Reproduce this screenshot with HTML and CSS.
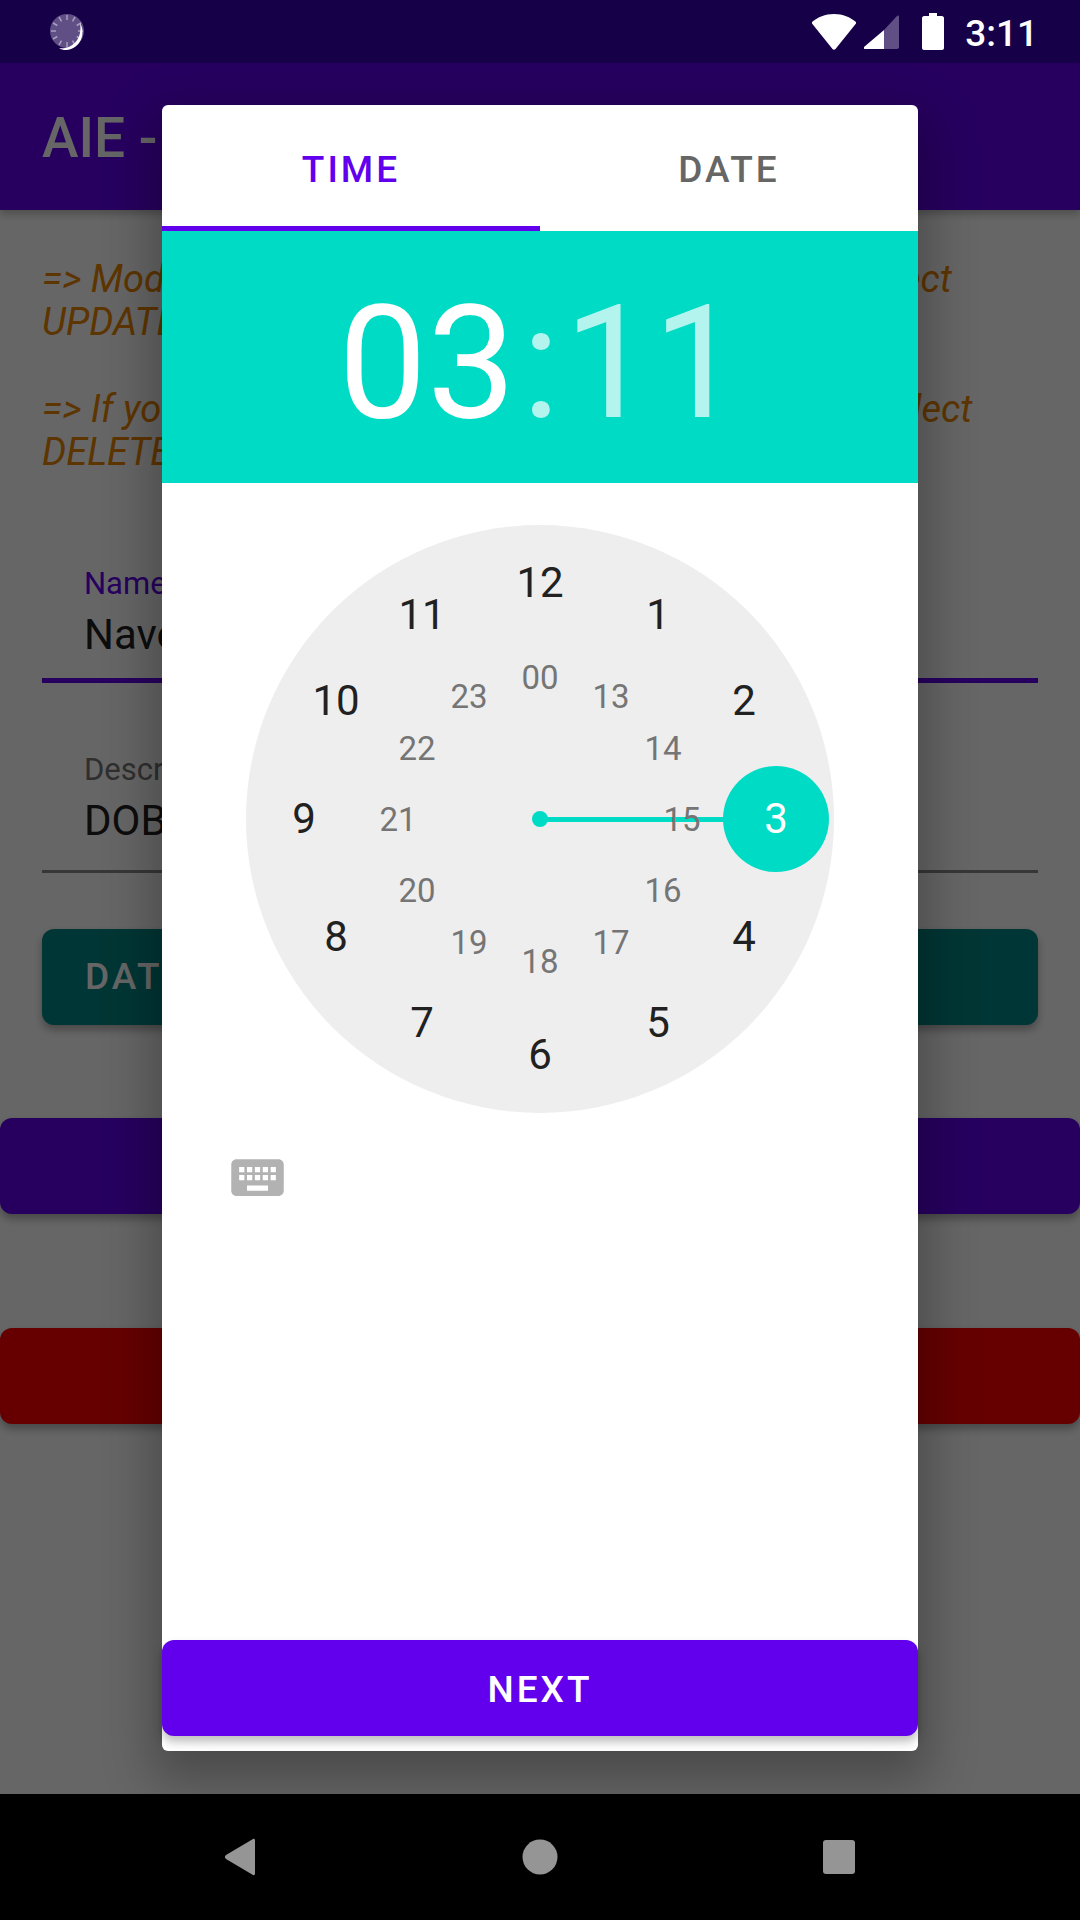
FILE: index.html
```html
<!DOCTYPE html>
<html lang="en">
<head>
  <meta charset="UTF-8" />
  <meta name="viewport" content="width=device-width, initial-scale=1.0"/>
  <title>AIE - Events</title>
  <link rel="stylesheet" href="styles.css">
</head>
<body>
  <div class="status-bar">
    <svg class="sync-icon" width="36" height="38" viewBox="0 0 36 38">
      <circle cx="17" cy="18" r="17" fill="#5f4f85"/>
      <path d="M17 2v5M25 4l-2.500 4.300M31 10l-4.300 2.500M33 18h-5M31 26l-4.300-2.500M25 32l-2.500-4.300M17 34v-5M9 32l2.500-4.300M3 26l4.300-2.500M1 18h5M3 10l4.300 2.500M9 4l2.500 4.300" stroke="#a79fc0" stroke-width="1.500" fill="none"/>
      <path d="M30 10c6 10 1 26-14 27c-3 0-5-.500-7-2c12 2 24-8 21-25z" fill="#fff"/>
    </svg>
    <div class="status-right">
      <svg width="44" height="36" viewBox="0 0 44 36">
        <path d="M22 0C13 0 6 3 0 8c-.500.500-.500 1 0 1.500L20.500 35c.800 1 2.200 1 3 0L44 9.500c.500-.500.500-1 0-1.500C38 3 31 0 22 0z" fill="#fff"/>
      </svg>
      <svg class="signal-icon" width="35" height="35" viewBox="0 0 35 35">
        <path d="M20 16L0 33c-.500.800 0 2 1 2h19z" fill="#fff"/>
        <path d="M20 16L33 2c1-1 2-.500 2 1v30c0 1-1 2-2 2H20z" fill="#5f4f85"/>
      </svg>
      <svg class="battery-icon" width="22" height="37" viewBox="0 0 22 37">
        <path d="M7 0h8v3h5c1 0 2 1 2 2v30c0 1-1 2-2 2H2c-1 0-2-1-2-2V5c0-1 1-2 2-2h5z" fill="#fff"/>
      </svg>
      <span class="status-time">3:11</span>
    </div>
  </div>

  <div class="main">
    <div class="toolbar">AIE - Events</div>

    <div class="notes">
      <p>=&gt; Modify the details that you need, and then just select<br>UPDATE</p>
      <p>=&gt; If you no longer need this entry then you should select<br>DELETE</p>
    </div>

    <div class="field field-active">
      <div class="field-label">Name</div>
      <div class="field-value">Naveen</div>
    </div>
    <div class="field">
      <div class="field-label">Description</div>
      <div class="field-value">DOB</div>
    </div>

    <div class="btn btn-teal">DATE &amp; TIME</div>
    <div class="btn btn-purple">UPDATE</div>
    <div class="btn btn-red">DELETE</div>

    <div class="scrim">
      <div class="dialog">
        <div class="tabs">
          <div class="tab tab-selected">TIME</div>
          <div class="tab">DATE</div>
        </div>

        <div class="time-header">
          <span class="time-hours">03</span><span class="time-sep">:</span><span class="time-minutes">11</span>
        </div>

        <div class="clock-wrap">
          <div class="clock">
            <div class="clock-hand"></div>
            <div class="clock-dot"></div>
            <div class="clock-selected"></div>
            <span class="num" style="left:294px;top:58px">12</span>
            <span class="num" style="left:412px;top:90px">1</span>
            <span class="num" style="left:498px;top:176px">2</span>
            <span class="num num-on" style="left:530px;top:294px">3</span>
            <span class="num" style="left:498px;top:412px">4</span>
            <span class="num" style="left:412px;top:498px">5</span>
            <span class="num" style="left:294px;top:530px">6</span>
            <span class="num" style="left:176px;top:498px">7</span>
            <span class="num" style="left:90px;top:412px">8</span>
            <span class="num" style="left:58px;top:294px">9</span>
            <span class="num" style="left:90px;top:176px">10</span>
            <span class="num" style="left:176px;top:90px">11</span>
            <span class="num num-inner" style="left:294px;top:152px">00</span>
            <span class="num num-inner" style="left:365px;top:171px">13</span>
            <span class="num num-inner" style="left:417px;top:223px">14</span>
            <span class="num num-inner" style="left:436px;top:294px">15</span>
            <span class="num num-inner" style="left:417px;top:365px">16</span>
            <span class="num num-inner" style="left:365px;top:417px">17</span>
            <span class="num num-inner" style="left:294px;top:436px">18</span>
            <span class="num num-inner" style="left:223px;top:417px">19</span>
            <span class="num num-inner" style="left:171px;top:365px">20</span>
            <span class="num num-inner" style="left:152px;top:294px">21</span>
            <span class="num num-inner" style="left:171px;top:223px">22</span>
            <span class="num num-inner" style="left:223px;top:171px">23</span>
          </div>
        </div>

        <svg class="keyboard-icon" width="63" height="63" viewBox="0 0 24 24">
          <path d="M20 5H4c-1.100 0-1.990.900-1.990 2L2 17c0 1.100.900 2 2 2h16c1.100 0 2-.900 2-2V7c0-1.100-.900-2-2-2zm-9 3h2v2h-2V8zm0 3h2v2h-2v-2zM8 8h2v2H8V8zm0 3h2v2H8v-2zm-1 2H5v-2h2v2zm0-3H5V8h2v2zm9 7H8v-2h8v2zm0-4h-2v-2h2v2zm0-3h-2V8h2v2zm3 3h-2v-2h2v2zm0-3h-2V8h2v2z" fill="#b2b2b2"/>
        </svg>

        <div class="next-btn">NEXT</div>
      </div>
    </div>
  </div>

  <div class="nav-bar">
    <svg width="64" height="38" viewBox="0 0 64 38">
      <path d="M17 17L44 1c1-.500 2 0 2 1.500v33c0 1.500-1 2-2 1.500L17 21c-1.500-1-1.500-3 0-4z" fill="#959595"/>
    </svg>
    <svg width="64" height="38" viewBox="0 0 64 38">
      <circle cx="32" cy="19" r="17.500" fill="#959595"/>
    </svg>
    <svg width="64" height="38" viewBox="0 0 64 38">
      <rect x="16" y="2" width="32" height="34" rx="3" fill="#959595"/>
    </svg>
  </div>
</body>
</html>
```

FILE: styles.css
```css
* {
  box-sizing: border-box;
}

html, body {
  margin: 0;
  padding: 0;
}

body {
  width: 1080px;
  height: 1920px;
  overflow: hidden;
  display: flex;
  flex-direction: column;
  font-family: Roboto, sans-serif;
  background: #fff;
}

.status-bar {
  height: 63px;
  flex: none;
  background: #160048;
  display: flex;
  align-items: center;
  justify-content: space-between;
  padding: 0 42px 0 50px;
}

.status-right {
  display: flex;
  align-items: center;
}

.signal-icon {
  margin-left: 8px;
}

.battery-icon {
  margin-left: 23px;
}

.status-time {
  margin-left: 21px;
  padding-top: 3px;
  color: #fff;
  font-size: 37px;
  font-weight: 500;
}

.main {
  position: relative;
  flex: 1;
  min-height: 0;
  overflow: hidden;
}

.toolbar {
  height: 147px;
  background: #6200ee;
  color: #fff;
  font-size: 55px;
  font-weight: 500;
  line-height: 147px;
  padding: 2px 0 0 42px;
  box-shadow: 0 4px 8px rgba(0,0,0,0.25);
}

.notes {
  padding: 48px 42px 0;
  color: #e88400;
  font-size: 38px;
  font-style: italic;
  line-height: 43px;
}

.notes p {
  margin: 0 0 44px;
}

.field {
  margin: 0 42px;
  padding: 0 42px;
}

.field-active {
  margin-top: 91px;
  border-bottom: 5px solid #6200ee;
  height: 118px;
}

.field + .field {
  border-bottom: 3px solid #8a8a8a;
  padding-top: 68px;
  height: 190px;
}

.field-label {
  color: #757575;
  font-size: 31px;
  line-height: 37px;
}

.field-active .field-label {
  color: #6200ee;
}

.field-value {
  color: #212121;
  font-size: 42px;
  line-height: 54px;
  margin-top: 6px;
}

.btn {
  height: 96px;
  border-radius: 12px;
  color: #fff;
  font-size: 37px;
  font-weight: 500;
  letter-spacing: 3px;
  line-height: 96px;
  text-align: center;
  box-shadow: 0 5px 8px rgba(0,0,0,0.3);
}

.btn-teal {
  margin: 56px 42px 0;
  background: #018786;
  text-align: left;
  padding-left: 43px;
}

.btn-purple {
  margin-top: 93px;
  background: #6200ee;
}

.btn-red {
  margin-top: 114px;
  background: #f00;
}

.scrim {
  position: absolute;
  top: 0;
  left: 0;
  width: 100%;
  height: 100%;
  background: rgba(0,0,0,0.6);
  display: flex;
  justify-content: center;
  padding-top: 42px;
}

.dialog {
  width: 756px;
  height: 1646px;
  background: #fff;
  border-radius: 6px;
  display: flex;
  flex-direction: column;
  box-shadow: 0 20px 50px 10px rgba(0,0,0,0.28);
}

.tabs {
  display: flex;
  height: 126px;
  flex: none;
}

.tab {
  flex: 1;
  text-align: center;
  color: #666;
  font-size: 37px;
  font-weight: 500;
  letter-spacing: 3px;
  line-height: 126px;
  padding-top: 2px;
}

.tab-selected {
  color: #6200ee;
  border-bottom: 5px solid #6200ee;
}

.time-header {
  height: 252px;
  flex: none;
  background: #00dbc6;
  color: #fff;
  font-size: 158px;
  line-height: 252px;
  padding-top: 6px;
  text-align: center;
}

.time-sep {
  margin: 0 4px 0 6px;
}

.time-sep,
.time-minutes {
  opacity: 0.7;
}

.clock-wrap {
  display: flex;
  justify-content: center;
  padding-top: 42px;
  flex: none;
}

.clock {
  position: relative;
  width: 588px;
  height: 588px;
  border-radius: 50%;
  background: #eee;
}

.clock-hand {
  position: absolute;
  left: 294px;
  top: 292px;
  width: 236px;
  height: 5px;
  background: #00dbc6;
}

.clock-dot {
  position: absolute;
  left: 286px;
  top: 286px;
  width: 16px;
  height: 16px;
  border-radius: 50%;
  background: #00dbc6;
}

.clock-selected {
  position: absolute;
  left: 477px;
  top: 241px;
  width: 106px;
  height: 106px;
  border-radius: 50%;
  background: #00dbc6;
}

.num {
  position: absolute;
  transform: translate(-50%, -50%);
  color: #212121;
  font-size: 42px;
  line-height: 1;
}

.num-inner {
  color: #757575;
  font-size: 33px;
}

.num-on {
  color: #fff;
}

.keyboard-icon {
  margin: 33px 0 0 64px;
  flex: none;
}

.next-btn {
  margin-top: auto;
  margin-bottom: 15px;
  height: 96px;
  flex: none;
  background: #6200ee;
  border-radius: 12px;
  color: #fff;
  font-size: 37px;
  font-weight: 500;
  letter-spacing: 3px;
  line-height: 100px;
  text-align: center;
  box-shadow: 0 6px 10px rgba(0,0,0,0.25);
}

.nav-bar {
  height: 126px;
  flex: none;
  background: #000;
  display: flex;
  align-items: center;
  justify-content: center;
  gap: 235px;
}
```
